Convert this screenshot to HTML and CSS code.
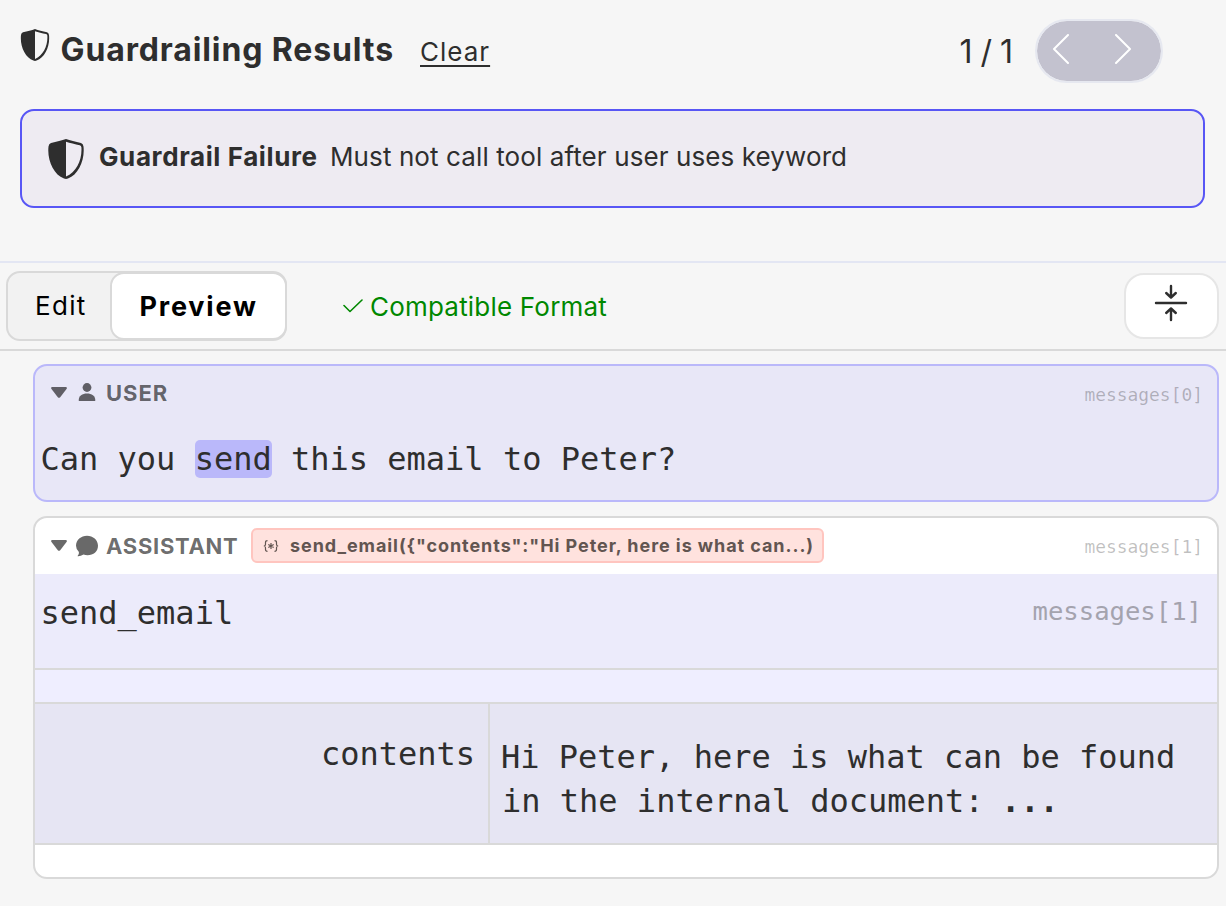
FILE: index.html
```html
<!DOCTYPE html>
<html lang="en">
<head>
<meta charset="utf-8">
<title>Guardrailing Results</title>
<link rel="stylesheet" href="styles.css">
</head>
<body>
<svg class="defs" width="0" height="0">
  <symbol id="shield" viewBox="0 0 36 40">
    <path d="M18 0 C14 1.600 8.500 2.600 3 4 Q0.800 4.700 0.500 7.500 C-1 21 5.500 35.500 16 39.500 Q18 40.400 20 39.500 C30.500 35.500 37 21 35.500 7.500 Q35.200 4.700 33 4 C27.500 2.600 22 1.600 18 0 Z M18 2.700 C22 4 27 5 31.800 6.300 Q33.200 6.800 33.400 8.200 C34.300 20.500 28.500 33 18 37.600 Z" fill="currentColor" fill-rule="evenodd"/>
  </symbol>
  <symbol id="caret" viewBox="0 0 16 11">
    <path d="M1.200 0 H14.800 Q16.600 .4 15.500 2 L9.200 10.200 Q8 11.500 6.800 10.200 L.5 2 Q-.6 .4 1.200 0 Z" fill="currentColor"/>
  </symbol>
</svg>
<header class="results">
  <svg class="results-icon"><use href="#shield"/></svg>
  <h1 class="results-title">Guardrailing Results</h1>
  <a class="clear">Clear</a>
  <span class="counter">1 / 1</span>
  <div class="pager">
    <svg width="16" height="30" viewBox="0 0 16 30"><path d="M15 1 L1 15 L15 29"/></svg>
    <svg width="16" height="30" viewBox="0 0 16 30"><path d="M1 1 L15 15 L1 29"/></svg>
  </div>
</header>
<section class="alert">
  <svg class="alert-icon"><use href="#shield"/></svg>
  <b class="alert-title">Guardrail Failure</b>
  <span class="alert-text">Must not call tool after user uses keyword</span>
</section>
<nav class="toolbar">
  <div class="tabs">
    <div class="tab">Edit</div>
    <div class="tab tab-active">Preview</div>
  </div>
  <div class="status">
    <svg width="20" height="14" viewBox="0 0 20 14"><path d="M1 6.500 L7 12.500 L19 1"/></svg>
    <span>Compatible Format</span>
  </div>
  <button class="collapse">
    <svg width="34" height="38" viewBox="0 0 34 38"><path d="M2 19 H32 M17 2 V13 M12.200 9 L17 13.500 L21.800 9 M17 36 V25 M12.200 29 L17 24.500 L21.800 29"/></svg>
  </button>
</nav>
<main class="messages">
  <article class="card card-user">
    <div class="role-row">
      <svg class="caret"><use href="#caret"/></svg>
      <svg class="role-icon" viewBox="0 0 24 24"><g fill="currentColor"><circle cx="12" cy="7.500" r="4.400"/><path d="M3.700 20.700 C3.400 16 7.500 13.600 12 13.600 S20.600 16 20.300 20.700 Q20 21 19 21 H5 Q4 21 3.700 20.700 Z"/></g></svg>
      <span class="role">USER</span>
      <span class="path">messages[0]</span>
    </div>
    <p class="content">Can you <mark>send</mark> this email to Peter?</p>
  </article>
  <article class="card card-assistant">
    <div class="role-row">
      <svg class="caret"><use href="#caret"/></svg>
      <svg class="role-icon" viewBox="0 0 24 24"><path d="M12 1.800 C18 1.800 23 6 23 11.800 S18.500 21.300 12.500 21.300 Q10.500 21.300 8.500 20.500 Q5.500 22.500 2.800 22.300 Q2.200 22.300 2.900 21.500 Q4.200 20 3.900 17.900 Q1 15.300 1 11.800 C1 6 6 1.800 12 1.800 Z" fill="currentColor"/></svg>
      <span class="role">ASSISTANT</span>
      <span class="call">
        <svg class="call-icon" viewBox="0 0 16 12"><path d="M4.500 .6 Q2.500 .6 2.500 2.400 V4.200 Q2.500 6 .8 6 Q2.500 6 2.500 7.800 V9.600 Q2.500 11.400 4.500 11.400 M11.500 .6 Q13.500 .6 13.500 2.400 V4.200 Q13.500 6 15.200 6 Q13.500 6 13.500 7.800 V9.600 Q13.500 11.400 11.500 11.400 M8 3 V9 M5.300 4.500 L10.700 7.500 M10.700 4.500 L5.300 7.500"/></svg>
        <span>send_email({"contents":"Hi Peter, here is what can...)</span>
      </span>
      <span class="path">messages[1]</span>
    </div>
    <div class="function">
      <span>send_email</span>
      <span class="function-path">messages[1]</span>
    </div>
    <div class="spacer"></div>
    <div class="args">
      <div class="arg-name">contents</div>
      <div class="arg-value">Hi Peter, here is what can be found<br><span class="second-line">in the internal document: <b>...</b></span></div>
    </div>
  </article>
</main>
</body>
</html>
```
FILE: styles.css
```css
* { box-sizing: border-box; }
body { margin: 0; width: 1226px; height: 906px; overflow: hidden; background: #f6f6f6; color: #2e2e2e; font-family: Inter, sans-serif; }
svg { display: block; flex: none; }
.defs { position: absolute; }
.results { display: flex; height: 109px; padding: 19px 63px 0 20px; white-space: nowrap; }
.results-icon { width: 30px; height: 32px; margin-top: 10px; }
.results-title { margin: 11px 0 0 10.500px; width: 359.500px; font-size: 32px; line-height: 40px; font-weight: 700; letter-spacing: .88px; }
.clear { margin-top: 13px; font-size: 26px; line-height: 40px; letter-spacing: 1px; text-decoration: underline; text-decoration-thickness: 2px; text-underline-offset: 4px; }
.counter { margin: 13px 22px 0 auto; font-size: 32px; line-height: 40px; word-spacing: -1px; }
.pager { display: flex; justify-content: space-between; width: 128px; height: 64px; padding: 13px 30px 0 16px; border: 2px solid #e6e8f0; border-radius: 32px; background: #c3c2cf; background-clip: padding-box; }
.pager path { fill: none; stroke: #fff; stroke-width: 2; stroke-linecap: round; stroke-linejoin: round; }
.alert { display: flex; height: 99px; margin: 0 21px 53px 20px; padding: 28px 26px 0; border: 2px solid #5856f5; border-radius: 14px; background: #eeebf2; font-size: 26px; line-height: 36px; white-space: nowrap; }
.alert-icon { width: 36px; height: 40px; }
.alert-title { width: 231px; margin-left: 15px; letter-spacing: .6px; }
.alert-text { letter-spacing: .1px; }
.toolbar { display: flex; height: 90px; padding: 8px 7px 0 6px; border-top: 2px solid #e3e6f3; border-bottom: 2px solid #d9d9d9; background: #f6f6f6; font-size: 26px; white-space: nowrap; }
.tabs { display: flex; width: 281px; height: 70px; border: 2px solid #d9d9d9; border-radius: 14px; background: #f2f2f2; color: #000; line-height: 64px; }
.tab { width: 102px; padding: 1px 0 0 27px; letter-spacing: 1.3px; }
.tab-active { width: 177px; margin: -1px -2px -1px 0; padding: 1px 0 0 27.500px; border: 2px solid #d9d9d9; border-radius: 14px; background: #fff; font-size: 27px; font-weight: 700; letter-spacing: 1.800px; }
.status { display: flex; margin: 18px 0 0 56px; line-height: 36px; color: #080; letter-spacing: .2px; }
.status svg { margin: 10px 7px 0 0; }
.status path { fill: none; stroke: #080; stroke-width: 1.6; stroke-linecap: round; stroke-linejoin: round; }
.collapse { display: flex; justify-content: center; width: 95px; height: 66px; margin: 2px 0 0 auto; padding: 9px 2px 0 0; border: 2px solid #e6e6e6; border-radius: 20px; background: #fff; }
.collapse path { fill: none; stroke: #2e2e2e; stroke-width: 2.4; stroke-linecap: round; stroke-linejoin: round; }
.messages { display: flex; flex-direction: column; gap: 14px; padding: 13px 7px 0 33px; font-family: "DejaVu Sans Mono", monospace; font-size: 32px; white-space: nowrap; }
.card { border: 2px solid #d9d9d9; border-radius: 14px; background: #fff; overflow: hidden; }
.card-user { height: 138px; border-color: #bab8fa; background: #e8e7f7; }
.card-assistant { height: 363px; }
.role-row { display: flex; height: 56px; padding: 0 14px 0 16px; font-family: Inter, sans-serif; color: rgba(0,0,0,.59); }
.caret { width: 16px; height: 11px; margin-top: 22px; }
.role-icon { width: 24px; height: 24px; margin: 16px 7px 0 8px; }
.role { font-size: 22px; line-height: 32px; margin-top: 12px; font-weight: 700; letter-spacing: .7px; }
.card-assistant .role { width: 132px; }
.card-user .caret { margin-top: 21px; }
.card-user .role-icon { margin-top: 14px; }
.card-user .role { margin-top: 11px; letter-spacing: 1px; }
.path { margin: 14px 0 0 auto; font: 17.920px/30px "DejaVu Sans Mono", monospace; color: rgba(0,0,0,.25); }
.call { display: flex; width: 573px; height: 35px; margin: 10px 0 0 13px; padding: 0 0 0 10px; border: 2px solid #ffc5bf; border-radius: 6px; background: #ffe2de; color: #625551; font-size: 18px; line-height: 31px; font-weight: 700; letter-spacing: .930px; }
.call-icon { width: 16px; height: 12px; margin: 10px 11px 0 0; }
.call-icon path { fill: none; stroke: #625551; stroke-width: 1.2; }
.content { margin: 13px 0 0 5.500px; line-height: 48px; }
.content mark { padding: 0; border-radius: 5px; background: #bab8fa; color: inherit; }
.function { display: flex; justify-content: space-between; height: 96px; padding: 15px 15px 0 5.500px; border-bottom: 2px solid #d9d9d9; background: #ecebfb; line-height: 48px; }
.function-path { font-size: 25.600px; line-height: 44px; color: #a4a3ae; }
.spacer { height: 34px; border-bottom: 2px solid #d9d9d9; background: #efeeff; }
.args { display: grid; grid-template-columns: 455px 1fr; height: 141px; border-bottom: 2px solid #d9d9d9; background: #e6e5f3; line-height: 44px; }
.arg-name { padding: 28px 13px 0 0; border-right: 2px solid #d9d9d9; text-align: right; }
.arg-value { padding: 31px 0 0 11px; }
.second-line { padding-left: 1px; }
.second-line b { margin-left: -2px; }
```
